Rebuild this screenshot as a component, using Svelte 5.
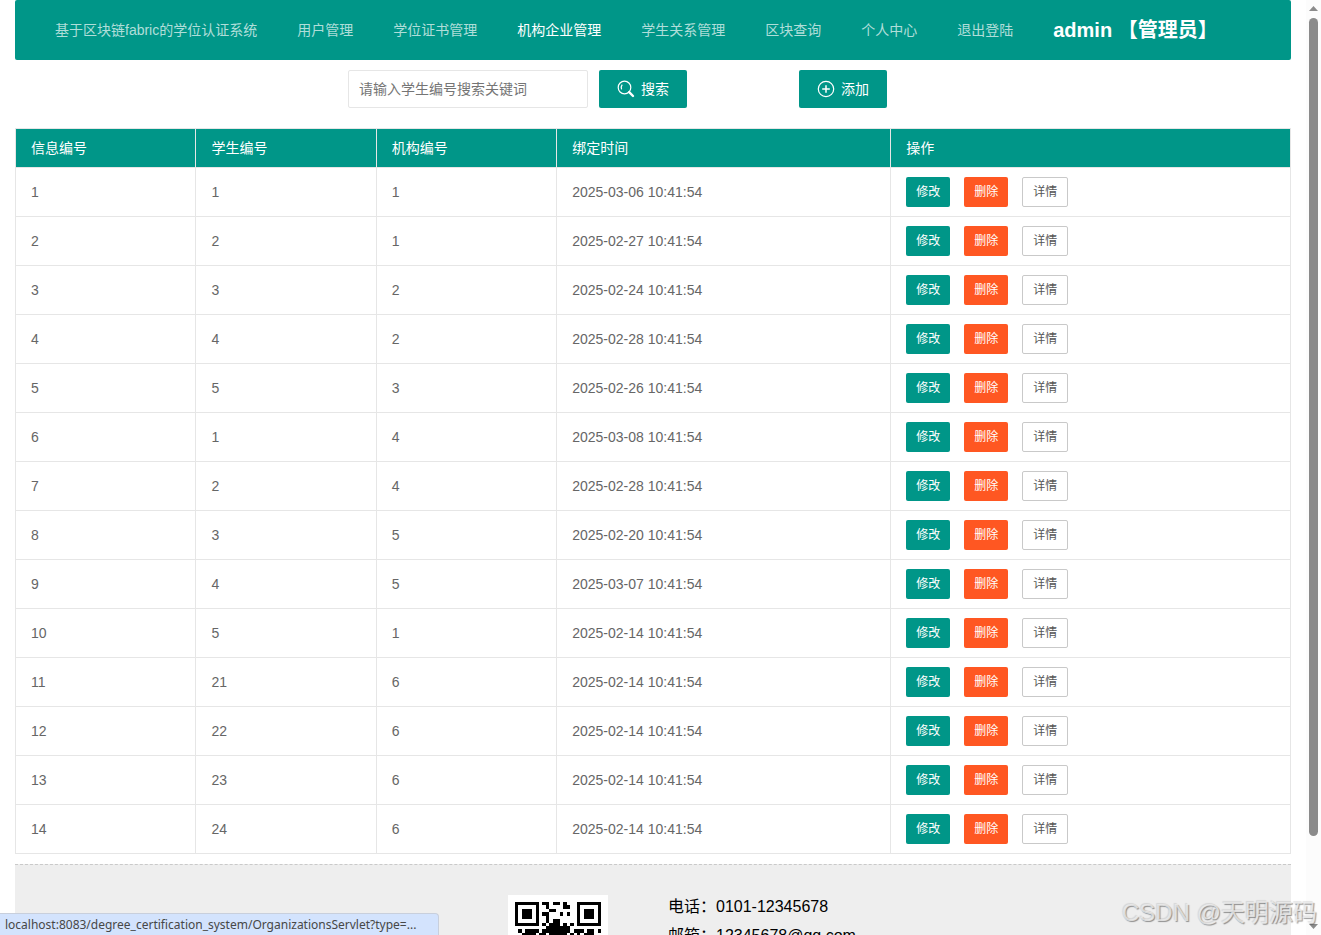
<script lang="ts">
  const menus = [
    '基于区块链fabric的学位认证系统',
    '用户管理',
    '学位证书管理',
    '机构企业管理',
    '学生关系管理',
    '区块查询',
    '个人中心',
    '退出登陆'
  ];
  const current = '机构企业管理';

  // 信息编号, 学生编号, 机构编号, 绑定日期
  const rows: [number, number, number, string][] = [
    [1, 1, 1, '2025-03-06'],
    [2, 2, 1, '2025-02-27'],
    [3, 3, 2, '2025-02-24'],
    [4, 4, 2, '2025-02-28'],
    [5, 5, 3, '2025-02-26'],
    [6, 1, 4, '2025-03-08'],
    [7, 2, 4, '2025-02-28'],
    [8, 3, 5, '2025-02-20'],
    [9, 4, 5, '2025-03-07'],
    [10, 5, 1, '2025-02-14'],
    [11, 21, 6, '2025-02-14'],
    [12, 22, 6, '2025-02-14'],
    [13, 23, 6, '2025-02-14'],
    [14, 24, 6, '2025-02-14']
  ];

  const qr = [
    '#######.##.##.#...#######',
    '#.....#..#....##..#.....#',
    '#.###.#...##......#.###.#',
    '#.###.#.##...#.#..#.###.#',
    '#.###.#..#........#.###.#',
    '#.....#..#.##.....#.....#',
    '#######.#.###.#.#.#######',
    '.........#######.........',
    '.#.####.########.###.##.#',
    '..####.##.#####.#.#.###..',
    '#..#..##.#..##.#..##.#.##',
    '.##.#..#.##.#..##.#..#.#.',
    '#.#..###..#..##.#.##..###',
    '..##.#..##.##..#.#..##..#',
    '#..#.##.#..#.###..#.##.#.',
    '.#.##..#.##..#.#.##..#.##',
    '#..#.##..#.##..######.#..',
    '........##..#.#.#...##.#.',
    '#######..#.##..##.#.#..##',
    '#.....#.#..#.##.#...##.#.',
    '#.###.#..##..#.######..##',
    '#.###.#.#.#.##..#.##.#...',
    '#.###.#..#..#.##..#..##.#',
    '#.....#.##.#..#.##.#.#.#.',
    '#######.#..##.#..##.##..#'
  ];

  let keyword = '';
</script>

<div class="window">
  <div class="page">
    <nav class="nav">
      {#each menus as menu}
        <a href="#top" class:active={menu === current}>{menu}</a>
      {/each}
      <strong class="user">admin 【管理员】</strong>
    </nav>

    <form class="search" on:submit|preventDefault>
      <input type="text" aria-label="学生编号" placeholder="请输入学生编号搜索关键词" bind:value={keyword} />
      <button class="btn">
        <svg viewBox="0 0 18 18" aria-hidden="true">
          <circle cx="7.5" cy="7.5" r="6.3" />
          <path d="M5.2 4.6Q3.6 6.6 4.6 9.4" />
          <path d="M12.2 12.2L16 16" class="handle" />
        </svg>
        搜索
      </button>
      <button type="button" class="btn add">
        <svg viewBox="0 0 18 18" aria-hidden="true">
          <circle cx="9" cy="9" r="7.7" />
          <path d="M9 5.2V12.8M5.2 9H12.8" class="plus" />
        </svg>
        添加
      </button>
    </form>

    <table>
      <colgroup>
        <col class="num" />
        <col class="num" />
        <col class="num" />
        <col class="time" />
        <col />
      </colgroup>
      <thead>
        <tr>
          <th>信息编号</th>
          <th>学生编号</th>
          <th>机构编号</th>
          <th>绑定时间</th>
          <th>操作</th>
        </tr>
      </thead>
      <tbody>
        {#each rows as [id, student, org, date]}
          <tr>
            <td>{id}</td>
            <td>{student}</td>
            <td>{org}</td>
            <td>{date} 10:41:54</td>
            <td>
              <div class="actions">
                <button class="btn small">修改</button>
                <button class="btn small danger">删除</button>
                <button class="btn small plain">详情</button>
              </div>
            </td>
          </tr>
        {/each}
      </tbody>
    </table>

    <footer>
      <div class="contact">
        <svg class="qr" viewBox="-2 -2 29 29" role="img" aria-label="二维码">
          {#each qr as line, y}
            {#each line as cell, x}
              {#if cell === '#'}
                <rect {x} {y} width="1" height="1" />
              {/if}
            {/each}
          {/each}
        </svg>
        <div class="lines">
          <p>电话：0101-12345678</p>
          <p>邮箱：12345678@qq.com</p>
        </div>
      </div>
    </footer>
  </div>

  <div class="scrollbar">
    <svg viewBox="0 0 9 5" aria-hidden="true"><path d="M4.5 0L9 5H0Z" /></svg>
    <div class="track"><div class="thumb"></div></div>
    <svg viewBox="0 0 9 5" aria-hidden="true"><path d="M0 0H9L4.5 5Z" /></svg>
  </div>

  <div class="status">localhost:8083/degree_certification_system/OrganizationsServlet?type=...</div>
  <div class="watermark">CSDN @天明源码</div>
</div>

<style>
  :global(body) {
    margin: 0;
    background: #fff;
  }

  .window {
    position: relative;
    display: flex;
    height: 100vh;
    overflow: hidden;
    font: 14px/24px "Liberation Sans", "Noto Sans CJK SC", sans-serif;
    color: #666;
  }

  .page {
    flex: 1;
    min-width: 0;
    padding: 0 15px;
  }

  .nav {
    display: flex;
    align-items: center;
    gap: 40px;
    height: 60px;
    padding: 0 40px;
    border-radius: 2px;
    background: #009688;
    white-space: nowrap;
  }

  .nav a {
    color: rgba(255, 255, 255, 0.7);
    text-decoration: none;
  }

  .nav a.active {
    color: #fff;
  }

  .user {
    font-size: 20px;
    color: #fff;
  }

  .search {
    display: flex;
    justify-content: center;
    gap: 11px;
    padding: 10px 71px 20px 0;
  }

  input {
    box-sizing: border-box;
    width: 240px;
    height: 38px;
    padding: 0 10px;
    border: 1px solid #e6e6e6;
    border-radius: 2px;
    font: inherit;
  }

  input::placeholder {
    color: #757575;
  }

  .btn {
    display: flex;
    align-items: center;
    justify-content: center;
    gap: 6px;
    box-sizing: border-box;
    height: 38px;
    padding: 0 18px;
    border: none;
    border-radius: 2px;
    background: #009688;
    color: #fff;
    font: inherit;
    white-space: nowrap;
    cursor: pointer;
  }

  .btn svg {
    width: 18px;
    height: 18px;
    fill: none;
    stroke: #fff;
    stroke-width: 1.2;
  }

  .btn .handle {
    stroke-width: 2.4;
    stroke-linecap: round;
  }

  .btn .plus {
    stroke-width: 1.5;
  }

  .add {
    margin-left: 101px;
  }

  table {
    width: 100%;
    border-collapse: collapse;
    table-layout: fixed;
  }

  .num {
    width: 14.15%;
  }

  .time {
    width: 26.2%;
  }

  th,
  td {
    padding: 9px 15px;
    border: 1px solid #e6e6e6;
    line-height: 20px;
    text-align: left;
    font-weight: 400;
  }

  th {
    background: #009688;
    color: #fff;
  }

  .actions {
    display: flex;
    gap: 14px;
  }

  .small {
    height: 30px;
    padding: 0 10px;
    font-size: 12px;
  }

  .danger {
    background: #ff5722;
  }

  .plain {
    border: 1px solid #c9c9c9;
    background: #fff;
    color: #555;
  }

  footer {
    margin-top: 10px;
    padding: 30px 0;
    border-top: 1px dashed #c9c9c9;
    background: #eee;
  }

  .contact {
    display: flex;
    gap: 60px;
    width: 290px;
    margin: 0 auto;
  }

  .qr {
    flex: none;
    width: 100px;
    height: 100px;
    background: #fff;
    shape-rendering: crispEdges;
  }

  .lines {
    font-size: 16px;
    line-height: 24px;
    color: #000;
    white-space: nowrap;
  }

  .lines p {
    margin: 0 0 5px;
  }

  .scrollbar {
    display: flex;
    flex-direction: column;
    align-items: center;
    gap: 7px;
    box-sizing: border-box;
    width: 15px;
    padding: 6px 0;
    background: #fcfcfc;
  }

  .scrollbar svg {
    width: 9px;
    height: 5px;
    fill: #8b8b8b;
  }

  .track {
    flex: 1;
  }

  .thumb {
    width: 9px;
    height: 91%;
    border-radius: 5px;
    background: #8b8b8b;
  }

  .status {
    position: absolute;
    left: 0;
    bottom: 0;
    box-sizing: border-box;
    height: 22px;
    padding: 0 22px 0 5px;
    border: 1px solid #c8cfdc;
    border-width: 1px 1px 0 0;
    border-radius: 0 4px 0 0;
    background: #d3e3fd;
    color: #474747;
    font: 12px/22px "Noto Sans", sans-serif;
    white-space: nowrap;
  }

  .watermark {
    position: absolute;
    right: 4px;
    bottom: 4px;
    color: rgba(238, 238, 238, 0.8);
    font-size: 24px;
    line-height: 36px;
    text-shadow: 1px 1px 1px rgba(0, 0, 0, 0.4), -1px -1px 1px rgba(0, 0, 0, 0.1);
    pointer-events: none;
  }
</style>
